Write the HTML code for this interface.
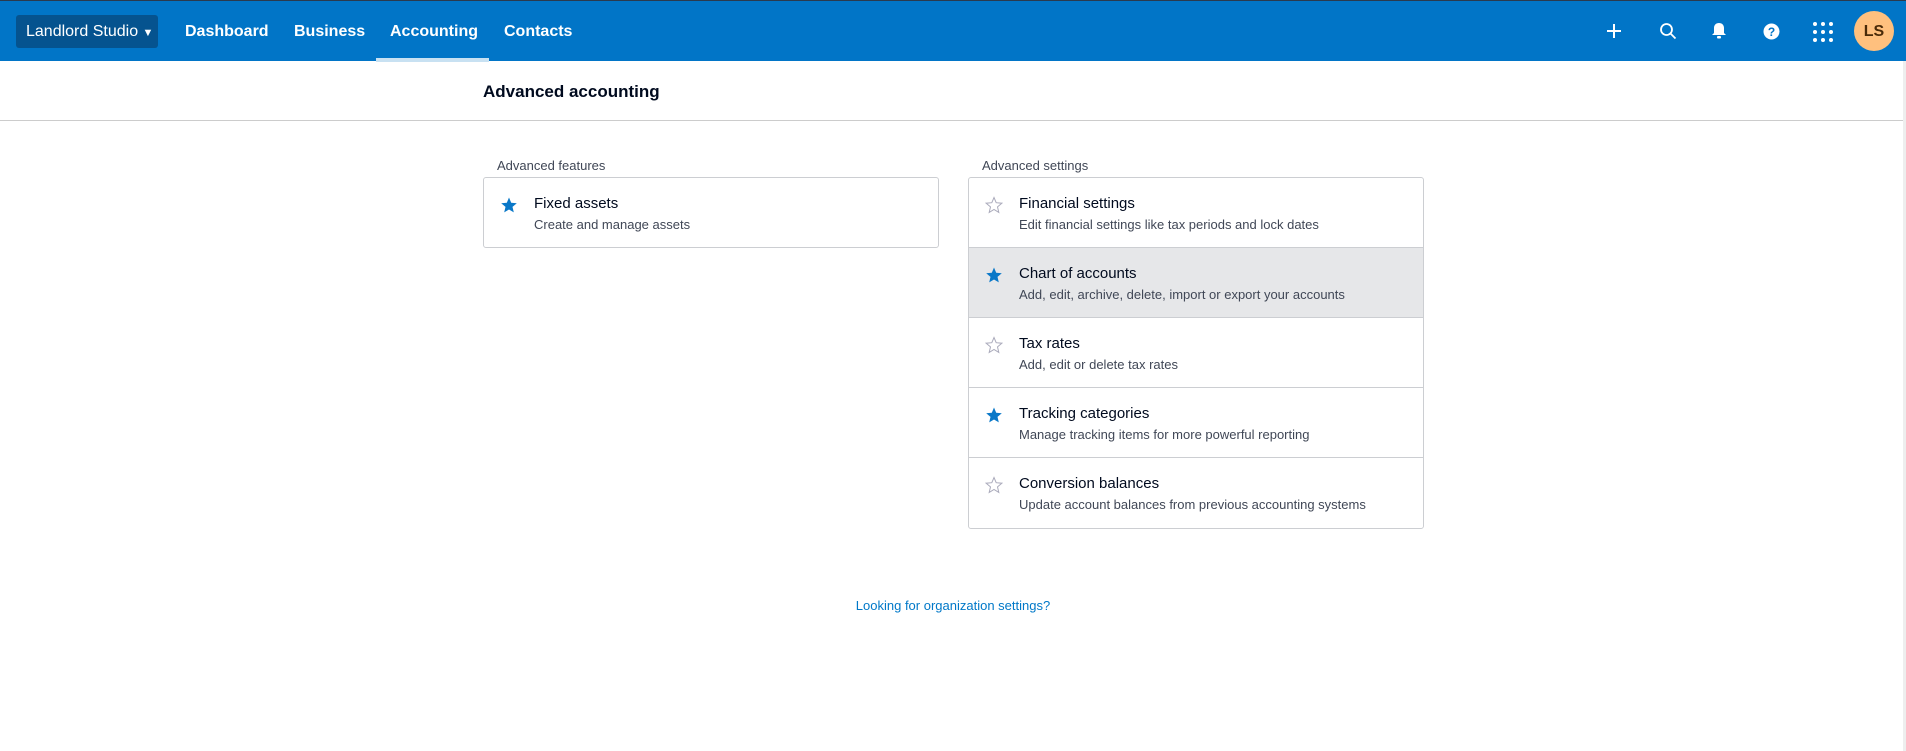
<!DOCTYPE html>
<html><head><style>
*{box-sizing:border-box;margin:0;padding:0}
body{width:1906px;height:751px;background:#fff;font-family:"Liberation Sans",Arial,sans-serif;color:#000a1e;position:relative;overflow:hidden}
.top{position:absolute;left:0;top:0;width:1906px;height:61px;background:#0175c7;border-top:1px solid #2a3a4e}
.org{position:absolute;left:16px;top:14px;width:142px;height:33px;background:#05538f;border-radius:3px;color:#fff;font-size:16px;line-height:33px;padding-left:10px}
.nav{position:absolute;top:0;height:61px;line-height:61px;color:#fff;font-weight:bold;font-size:16px}
.ul{position:absolute;left:376px;top:57px;width:113px;height:4px;background:#c8e1f2}
.av{position:absolute;left:1854px;top:10px;width:40px;height:40px;border-radius:50%;background:#ffc07e;color:#4a2a08;font-weight:bold;font-size:16px;text-align:center;line-height:42px}
.sub{position:absolute;left:0;top:61px;width:1903px;height:60px;border-bottom:1px solid #ccc}
.sub h1{position:absolute;left:483px;top:21px;font-size:17px;font-weight:bold}
.lbl{position:absolute;top:158px;font-size:13px;color:#404756}
.card{position:absolute;border:1px solid #ccced2;border-radius:3px;background:#fff;overflow:hidden}
.row{position:relative;height:70px;border-bottom:1px solid #ccced2}
.row:last-child{border-bottom:none}
.row .t{position:absolute;left:50px;top:17px;font-size:15px;color:#000a1e}
.row .d{position:absolute;left:50px;top:39px;font-size:13px;color:#404756}
.row svg{position:absolute;left:16px;top:18px}
.link{position:absolute;left:0;width:1906px;text-align:center;top:598px;font-size:13px;color:#0078c8}
</style></head><body>
<div class="top">
<div class="org">Landlord Studio <span style="font-size:11px">&#9660;</span></div>
<div class="nav" style="left:185px">Dashboard</div>
<div class="nav" style="left:294px">Business</div>
<div class="nav" style="left:390px">Accounting</div>
<div class="nav" style="left:504px">Contacts</div>
<div class="ul"></div>
<svg style="position:absolute;left:1606px;top:22px" width="16" height="16"><path d="M8 1v14M1 8h14" stroke="#fff" stroke-width="2"/></svg>
<svg style="position:absolute;left:1659px;top:21px" width="18" height="18"><circle cx="7.5" cy="7.5" r="5.5" stroke="#fff" stroke-width="1.8" fill="none"/><path d="M11.5 11.5l5 5" stroke="#fff" stroke-width="1.8"/></svg>
<svg style="position:absolute;left:1711px;top:21px" width="16" height="18"><path d="M8 1c-3 0-5 2-5 5v5l-2 2h14l-2-2V6c0-3-2-5-5-5z" fill="#fff"/><rect x="6" y="14" width="4" height="2.5" rx="1" fill="#fff"/></svg>
<svg style="position:absolute;left:1763px;top:22px" width="17" height="17"><circle cx="8.5" cy="8.5" r="8" fill="#fff"/><text x="8.5" y="13" text-anchor="middle" font-size="12" font-weight="bold" font-family="Liberation Sans" fill="#0175c7">?</text></svg>
<svg style="position:absolute;left:1812px;top:20px" width="22" height="22"><g fill="#fff"><circle cx="3" cy="3" r="2"/><circle cx="11" cy="3" r="2"/><circle cx="19" cy="3" r="2"/><circle cx="3" cy="11" r="2"/><circle cx="11" cy="11" r="2"/><circle cx="19" cy="11" r="2"/><circle cx="3" cy="19" r="2"/><circle cx="11" cy="19" r="2"/><circle cx="19" cy="19" r="2"/></g></svg>
<div class="av">LS</div>
</div>
<div class="sub"><h1>Advanced accounting</h1></div>
<div class="lbl" style="left:497px">Advanced features</div>
<div class="lbl" style="left:982px">Advanced settings</div>
<svg width="0" height="0" style="position:absolute"><defs>
<path id="s" d="M9 1.5l2.2 5.2 5.6.5-4.3 3.7 1.3 5.5L9 13.5l-4.8 2.9 1.3-5.5L1.2 7.2l5.6-.5z"/></defs></svg>
<div class="card" style="left:483px;top:177px;width:456px;height:71px">
<div class="row"><svg width="18" height="18"><use href="#s" fill="#0a78c8"/></svg><div class="t">Fixed assets</div><div class="d">Create and manage assets</div></div>
</div>
<div class="card" style="left:968px;top:177px;width:456px;height:352px">
<div class="row"><svg width="18" height="18"><use href="#s" fill="none" stroke="#aab" stroke-width="1"/></svg><div class="t">Financial settings</div><div class="d">Edit financial settings like tax periods and lock dates</div></div>
<div class="row" style="background:#e6e7e9"><svg width="18" height="18"><use href="#s" fill="#0a78c8"/></svg><div class="t">Chart of accounts</div><div class="d">Add, edit, archive, delete, import or export your accounts</div></div>
<div class="row"><svg width="18" height="18"><use href="#s" fill="none" stroke="#aab" stroke-width="1"/></svg><div class="t">Tax rates</div><div class="d">Add, edit or delete tax rates</div></div>
<div class="row"><svg width="18" height="18"><use href="#s" fill="#0a78c8"/></svg><div class="t">Tracking categories</div><div class="d">Manage tracking items for more powerful reporting</div></div>
<div class="row"><svg width="18" height="18"><use href="#s" fill="none" stroke="#aab" stroke-width="1"/></svg><div class="t">Conversion balances</div><div class="d">Update account balances from previous accounting systems</div></div>
</div>
<div class="link">Looking for organization settings?</div>
<div style="position:absolute;left:1903px;top:61px;width:3px;height:690px;background:#eee"></div>
</body></html>
